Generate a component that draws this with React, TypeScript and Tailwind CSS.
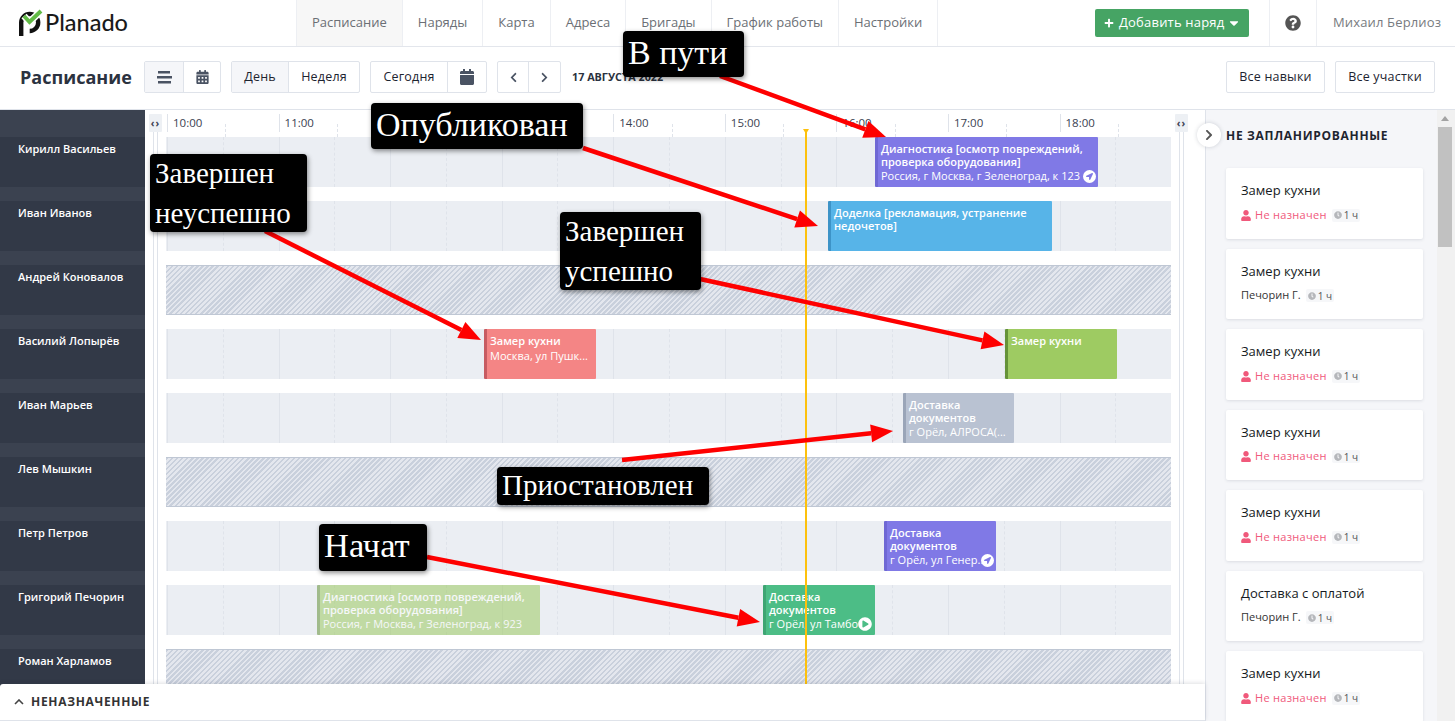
import React from 'react';
import {
  FaPlus,
  FaCaretDown,
  FaQuestionCircle,
  FaCalendarAlt,
  FaCalendar,
  FaChevronLeft,
  FaChevronRight,
  FaLocationArrow,
  FaPlayCircle,
  FaUser,
  FaClock,
} from 'react-icons/fa';

const navItems = ['Расписание', 'Наряды', 'Карта', 'Адреса', 'Бригады', 'График работы', 'Настройки'];
const hours = ['10:00', '11:00', '12:00', '13:00', '14:00', '15:00', '16:00', '17:00', '18:00'];
const cells = Array.from({ length: 18 }, (_, i) => i);

interface Job {
  left: number;
  width: number;
  title: string;
  address?: string;
  className: string;
  icon?: 'arrow' | 'play';
}

interface Worker {
  name: string;
  off?: boolean;
  jobs?: Job[];
}

const workers: Worker[] = [
  {
    name: 'Кирилл Васильев',
    jobs: [
      {
        left: 709,
        width: 223,
        title: 'Диагностика [осмотр повреждений, проверка оборудования]',
        address: 'Россия, г Москва, г Зеленоград, к 123',
        className: 'bg-[#8079e6] border-[#6f68d4]',
        icon: 'arrow',
      },
    ],
  },
  {
    name: 'Иван Иванов',
    jobs: [
      {
        left: 662,
        width: 224,
        title: 'Доделка [рекламация, устранение недочетов]',
        className: 'bg-[#57b4e8] border-[#3d93c7]',
      },
    ],
  },
  { name: 'Андрей Коновалов', off: true },
  {
    name: 'Василий Лопырёв',
    jobs: [
      {
        left: 318,
        width: 112,
        title: 'Замер кухни',
        address: 'Москва, ул Пушк...',
        className: 'bg-[#f48585] border-[#c75c62]',
      },
      {
        left: 839,
        width: 112,
        title: 'Замер кухни',
        className: 'bg-[#9ecb62] border-[#659238]',
      },
    ],
  },
  {
    name: 'Иван Марьев',
    jobs: [
      {
        left: 737,
        width: 111,
        title: 'Доставка документов',
        address: 'г Орёл, АЛРОСА(...',
        className: 'bg-[#b9c2d2] border-[#9aa5b8]',
      },
    ],
  },
  { name: 'Лев Мышкин', off: true },
  {
    name: 'Петр Петров',
    jobs: [
      {
        left: 718,
        width: 112,
        title: 'Доставка документов',
        address: 'г Орёл, ул Генер..',
        className: 'bg-[#8079e6] border-[#6f68d4]',
        icon: 'arrow',
      },
    ],
  },
  {
    name: 'Григорий Печорин',
    jobs: [
      {
        left: 151,
        width: 223,
        title: 'Диагностика [осмотр повреждений, проверка оборудования]',
        address: 'Россия, г Москва, г Зеленоград, к 923',
        className: 'bg-[#9ecb62] border-[#659238] opacity-[0.55]',
      },
      {
        left: 597,
        width: 112,
        title: 'Доставка документов',
        address: 'г Орёл, ул Тамбо',
        className: 'bg-[#4cbd86] border-[#3ea573]',
        icon: 'play',
      },
    ],
  },
  { name: 'Роман Харламов', off: true },
];

const unplanned = [
  { title: 'Замер кухни' },
  { title: 'Замер кухни', who: 'Печорин Г.' },
  { title: 'Замер кухни' },
  { title: 'Замер кухни' },
  { title: 'Замер кухни' },
  { title: 'Доставка с оплатой', who: 'Печорин Г.' },
  { title: 'Замер кухни' },
];

const arrows = [
  { x1: 720, y1: 76, x2: 886, y2: 137 },
  { x1: 583, y1: 148, x2: 818, y2: 226 },
  { x1: 265, y1: 231, x2: 481, y2: 340 },
  { x1: 700, y1: 279, x2: 1004, y2: 345 },
  { x1: 622, y1: 460, x2: 893, y2: 431 },
  { x1: 427, y1: 557, x2: 760, y2: 622 },
];

const Arrow = ({ x1, y1, x2, y2 }: { x1: number; y1: number; x2: number; y2: number }) => {
  const len = Math.hypot(x2 - x1, y2 - y1);
  const ux = (x2 - x1) / len;
  const uy = (y2 - y1) / len;
  const bx = x2 - ux * 22;
  const by = y2 - uy * 22;
  const head = `${x2},${y2} ${bx - uy * 9},${by + ux * 9} ${bx + uy * 9},${by - ux * 9}`;
  return (
    <g>
      <line x1={x1} y1={y1} x2={bx} y2={by} stroke="#fe0000" strokeWidth={4.5} />
      <polygon points={head} fill="#fe0000" />
    </g>
  );
};

const Logo = () => (
  <div className="flex w-[296px] items-center pl-[19px]">
    <svg width="24" height="28" viewBox="0 0 24 28">
      <path d="M2.2 27V13.5a8.5 8.5 0 1 1 8.5 8.5" fill="none" stroke="#111" strokeWidth="4.4" />
      <path d="M5 7l5.5 6L22 2" fill="none" stroke="#fff" strokeWidth="7" />
      <path d="M5 7l5.5 6L22 2" fill="none" stroke="#62bb46" strokeWidth="4" />
    </svg>
    <span className="ml-[2px] font-['Lato',sans-serif] text-[23.5px] font-medium leading-none text-[#1a1a1a]">Planado</span>
  </div>
);

const Header = () => (
  <header className="flex h-[47px] shrink-0 border-b border-[#e3e6ec] bg-white">
    <Logo />
    <nav className="flex">
      {navItems.map((item, i) => (
        <div
          key={item}
          className={`flex items-center border-l border-[#edeff3] pl-[15px] pr-[15px] text-[13px] text-[#6b6f75] ${
            i === 0 ? 'bg-[#f7f7f7]' : ''
          } ${i === navItems.length - 1 ? 'border-r' : ''}`}
        >
          {item}
        </div>
      ))}
    </nav>
    <div className="ml-auto flex items-center">
      <button className="flex h-[28px] w-[154px] items-center gap-[5px] rounded-[2px] bg-[#46a464] pl-[9px] text-[13px] tracking-[0.2px] text-white">
        <FaPlus className="h-[10px] w-[10px]" />
        Добавить наряд
        <FaCaretDown className="-ml-[2px] h-[14px] w-[14px]" />
      </button>
      <div className="ml-[20px] flex h-full w-[48px] items-center justify-center border-x border-[#edeff3]">
        <FaQuestionCircle className="h-[16px] w-[16px] text-[#555]" />
      </div>
      <div className="w-[138px] pl-[16px] text-[13px] tracking-[0.15px] text-[#777b80]">Михаил Берлиоз</div>
    </div>
  </header>
);

const ToolButton = ({ children, className = '' }: { children: React.ReactNode; className?: string }) => (
  <div className={`flex h-full items-center justify-center text-[12.5px] tracking-[0.2px] text-[#1d2430] ${className}`}>
    {children}
  </div>
);

const groupClass = 'flex h-[32px] rounded-[2px] border border-[#dfe3ea] divide-x divide-[#dfe3ea]';

const Toolbar = () => (
  <div className="flex h-[62px] shrink-0 items-center bg-white pb-[2px] pl-[20px] pr-[20px]">
    <h1 className="w-[124px] text-[18px] font-bold text-[#2b3240]">Расписание</h1>
    <div className={groupClass}>
      <ToolButton className="w-[39px] bg-[#f5f6f9]">
        <svg width="15" height="13" viewBox="0 0 15 13" fill="#4a5363">
          <rect x="1" y="0" width="12" height="2.5" />
          <rect x="0" y="5" width="15" height="2.5" />
          <rect x="1" y="10" width="13" height="2.5" />
        </svg>
      </ToolButton>
      <ToolButton className="w-[36px]">
        <FaCalendarAlt className="h-[14px] w-[13px] text-[#4a5363]" />
      </ToolButton>
    </div>
    <div className={`${groupClass} ml-[10px]`}>
      <ToolButton className="w-[57px] bg-[#f5f6f9]">День</ToolButton>
      <ToolButton className="w-[70px]">Неделя</ToolButton>
    </div>
    <div className={`${groupClass} ml-[10px]`}>
      <ToolButton className="w-[77px]">Сегодня</ToolButton>
      <ToolButton className="w-[38px]">
        <FaCalendar className="h-[16px] w-[14px] text-[#4a5363]" />
      </ToolButton>
    </div>
    <div className={`${groupClass} ml-[10px]`}>
      <ToolButton className="w-[31px]">
        <FaChevronLeft className="h-[11px] w-[11px] text-[#4a5363]" />
      </ToolButton>
      <ToolButton className="w-[31px]">
        <FaChevronRight className="h-[11px] w-[11px] text-[#4a5363]" />
      </ToolButton>
    </div>
    <span className="ml-[11px] text-[10.8px] font-bold text-[#2b3240]">17 АВГУСТА 2022</span>
    <div className={`${groupClass} ml-auto`}>
      <ToolButton className="w-[97px]">Все навыки</ToolButton>
    </div>
    <div className={`${groupClass} ml-[10px]`}>
      <ToolButton className="w-[98px]">Все участки</ToolButton>
    </div>
  </div>
);

const Sidebar = () => (
  <aside className="w-[145px] shrink-0 bg-[#3b4250]">
    <div className="h-[27px]" />
    {workers.map((w) => (
      <div key={w.name} className="mb-[14px] h-[50px] bg-[#323947] pl-[18px] pt-[4px] text-[11px] font-semibold leading-[16px] text-white">
        {w.name}
      </div>
    ))}
  </aside>
);

const JobCard = ({ job }: { job: Job }) => (
  <div
    className={`absolute top-0 z-10 h-[50px] rounded-[1px] border-l-[3px] pl-[3px] pt-[6px] text-white ${job.className}`}
    style={{ left: job.left, width: job.width }}
  >
    <div className="pr-[6px] text-[11px] font-semibold leading-[12.5px]">{job.title}</div>
    {job.address && <div className="mt-[1px] whitespace-nowrap text-[11px] leading-[13px]">{job.address}</div>}
    {job.icon === 'arrow' && (
      <span className="absolute bottom-[4px] right-[2px] flex h-[13px] w-[13px] items-center justify-center rounded-full bg-white">
        <FaLocationArrow className="h-[7px] w-[7px] text-[#8079e6]" />
      </span>
    )}
    {job.icon === 'play' && <FaPlayCircle className="absolute bottom-[4px] right-[3px] h-[14px] w-[14px] text-white" />}
  </div>
);

const Timeline = () => (
  <section className="relative flex-1 overflow-hidden bg-white">
    <div className="flex h-[27px] pl-[22px] pr-[34px]">
      {cells.map((c) =>
        c % 2 === 0 ? (
          <div key={c} className="mt-[4px] h-[18px] flex-1 border-l border-[#dfe3ea] pl-[5px] text-[11.5px] leading-[18px] text-[#3a4150]">
            {hours[c / 2]}
          </div>
        ) : (
          <div key={c} className="mt-[14px] h-[13px] flex-1 border-l border-dashed border-[#dfe3ea]" />
        ),
      )}
    </div>
    <div className="pl-[21px] pr-[34px]">
      {workers.map((w) =>
        w.off ? (
          <div
            key={w.name}
            className="mb-[14px] h-[50px] border-y border-[#bfc7d4] bg-[repeating-linear-gradient(135deg,#c9d0dc_0,#c9d0dc_1.8px,#e4e7ee_1.8px,#e4e7ee_3.6px)]"
          />
        ) : (
          <div key={w.name} className="relative mb-[14px] flex h-[50px] bg-[#ebeef3] pl-[1px]">
            {cells.map((c) => (
              <div key={c} className={`flex-1 border-l border-[#dfe3ea] ${c % 2 === 1 ? 'border-dashed' : ''}`} />
            ))}
            {w.jobs?.map((job) => <JobCard key={job.left} job={job} />)}
          </div>
        ),
      )}
    </div>

    {/* collapse handles and rails on both edges of the grid */}
    <div className="absolute bottom-0 left-[8px] top-[22px] w-[5px] border-x border-[#dfe3ea]" />
    <div className="absolute bottom-0 right-[21px] top-[22px] w-[5px] border-x border-[#dfe3ea]" />
    <div className="absolute left-[4px] top-[4px] flex h-[18px] w-[13px] items-center justify-center rounded-[1px] bg-[#edf0f4] text-[10px] font-bold leading-none tracking-[1px] text-[#3a4150]">
      ‹›
    </div>
    <div className="absolute right-[17px] top-[4px] flex h-[18px] w-[13px] items-center justify-center rounded-[1px] bg-[#edf0f4] text-[10px] font-bold leading-none tracking-[1px] text-[#3a4150]">
      ‹›
    </div>

    {/* current time marker */}
    <div className="absolute bottom-0 left-[660px] top-[20px] z-20 w-[2px] bg-[#fdc10d]" />
    <div className="absolute left-[658px] top-[19px] z-20 h-0 w-0 border-x-[3px] border-t-[5px] border-x-transparent border-t-[#fdc10d]" />
  </section>
);

const Badge = () => (
  <span className="ml-[5px] flex h-[13px] items-center gap-[2px] rounded-[2px] bg-[#f6f7f9] px-[2px] text-[10px] leading-none text-[#555]">
    <FaClock className="h-[8px] w-[8px] text-[#b5b7bb]" />1 ч
  </span>
);

const UnplannedPanel = () => (
  <aside className="relative flex w-[250px] shrink-0 border-l border-[#dfe3ea] bg-[#f5f6f9]">
    <div className="flex-1 overflow-hidden">
      <h2 className="pl-[20px] pt-[17px] text-[12px] font-bold uppercase leading-[17px] tracking-[0.7px] text-[#1e2530]">
        Не запланированные
      </h2>
      <div className="ml-[20px] mt-[24px] w-[197px]">
        {unplanned.map((card, i) => (
          <div key={i} className="mb-[10px] h-[70.5px] rounded-[2px] bg-white px-[15px] pt-[13px] shadow-[0_1px_3px_rgba(40,50,70,0.12)]">
            <div className="text-[13px] leading-[18px] text-[#151a22]">{card.title}</div>
            <div className="mt-[7px] flex h-[18px] items-center text-[11px]">
              {card.who ? (
                <span className="text-[#333]">{card.who}</span>
              ) : (
                <>
                  <FaUser className="mr-[4px] h-[11px] w-[10px] text-[#f0597b]" />
                  <span className="tracking-[0.3px] text-[#f0597b]">Не назначен</span>
                </>
              )}
              <Badge />
            </div>
          </div>
        ))}
      </div>
    </div>
    <div className="flex w-[18px] shrink-0 flex-col items-center bg-[#f1f1f1] pl-[1px] pr-[3px]">
      <div className="mt-[6px] h-0 w-0 border-x-[4px] border-b-[5px] border-x-transparent border-b-[#a3a3a3]" />
      <div className="mt-[6px] h-[120px] w-full bg-[#c1c1c1]" />
    </div>
    <div className="absolute -left-[9px] top-[13px] z-20 flex h-[24px] w-[24px] items-center justify-center rounded-full bg-white shadow-[0_0_4px_rgba(40,50,70,0.2)]">
      <FaChevronRight className="h-[12px] w-[12px] text-[#555]" />
    </div>
  </aside>
);

const BottomBar = () => (
  <div className="absolute bottom-0 left-0 z-30 flex h-[37px] w-[1205px] items-center rounded-tl-[3px] border-b border-[#dfe3ea] bg-white pl-[14px] shadow-[0_-1px_4px_rgba(40,50,70,0.15)]">
    <svg width="10" height="6" viewBox="0 0 10 6" fill="none" stroke="#444" strokeWidth="1.6">
      <path d="M1 5l4-4 4 4" />
    </svg>
    <span className="ml-[7px] text-[12px] font-bold uppercase tracking-[0.7px] text-[#333]">Неназначенные</span>
  </div>
);

const noteClass =
  "absolute z-50 rounded-[4px] bg-black font-['Liberation_Serif',serif] text-white shadow-[1px_2px_5px_rgba(0,0,0,0.45)]";

const Annotations = () => (
  <>
    <svg className="pointer-events-none absolute inset-0 z-40 h-full w-full">
      {arrows.map((a) => (
        <Arrow key={a.x1} {...a} />
      ))}
    </svg>
    <div className={`${noteClass} left-[623px] top-[31px] h-[46px] w-[121px] pl-[5px] text-[34px] leading-[44px]`}>В пути</div>
    <div className={`${noteClass} left-[371px] top-[103px] h-[46px] w-[212px] pl-[5px] text-[34px] leading-[44px]`}>Опубликован</div>
    <div className={`${noteClass} left-[150px] top-[154px] h-[78px] w-[157px] pl-[5px] text-[29px] leading-[39.5px]`}>
      Завершен
      <br />
      неуспешно
    </div>
    <div className={`${noteClass} left-[560px] top-[212px] h-[78px] w-[141px] pl-[5px] text-[29px] leading-[39.5px]`}>
      Завершен
      <br />
      успешно
    </div>
    <div className={`${noteClass} left-[497px] top-[467px] h-[38px] w-[212px] pl-[5px] text-[29px] leading-[36px]`}>Приостановлен</div>
    <div className={`${noteClass} left-[319px] top-[524px] h-[47px] w-[108px] pl-[5px] text-[34.5px] leading-[43px]`}>Начат</div>
  </>
);

export default function App() {
  return (
    <div className="relative flex h-screen w-full flex-col overflow-hidden bg-white font-['Open_Sans',sans-serif]">
      <Header />
      <Toolbar />
      <main className="flex min-h-0 flex-1 border-t border-[#dfe3ea]">
        <Sidebar />
        <Timeline />
        <UnplannedPanel />
      </main>
      <BottomBar />
      <Annotations />
    </div>
  );
}
